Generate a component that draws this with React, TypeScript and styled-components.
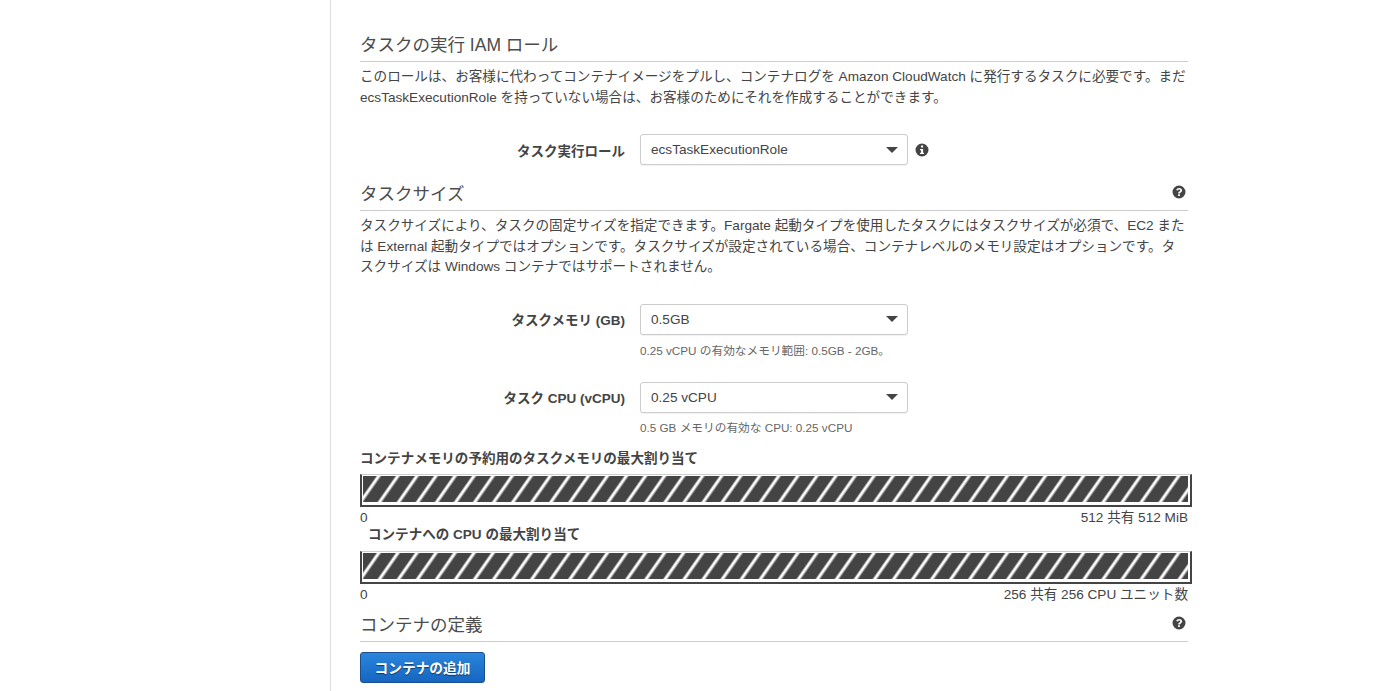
import React from "react";
import styled, { createGlobalStyle } from "styled-components";

const Global = createGlobalStyle`
  html, body { margin: 0; padding: 0; background: #fff; height: 691px; overflow: hidden; }
  body { font-family: "Liberation Sans", "Noto Sans CJK JP", sans-serif; color: #444; font-size: 13.6px; }
`;

const Page = styled.div`
  display: flex;
  height: 691px;
  overflow: hidden;
`;
const Sidebar = styled.aside`
  width: 330px;
  flex: none;
  border-right: 1px solid #ddd;
`;
const Main = styled.main`
  width: 828px;
  margin-left: 29px;
  padding-top: 32px;
`;
const SectionHead = styled.div<{ $top?: number }>`
  display: flex;
  justify-content: space-between;
  height: 30px;
  box-sizing: border-box;
  border-bottom: 1px solid #ccc;
  margin-top: ${(p) => p.$top ?? 0}px;
`;
const Title = styled.h3`
  margin: 0;
  font-size: 17.5px;
  font-weight: 400;
  line-height: 26px;
  color: #4c4c4c;
`;
const HelpIcon = styled.svg`
  width: 14px;
  height: 14px;
  margin: 4px 2px 0 0;
  fill: #444;
`;
const Para = styled.p`
  margin: 5px 0 0;
  font-size: 13.6px;
  line-height: 20.5px;
  color: #444;
  width: 828px;
`;
const FieldRow = styled.div<{ $top: number }>`
  display: flex;
  align-items: center;
  margin-top: ${(p) => p.$top}px;
  height: 31px;
`;
const Label = styled.label`
  width: 265px;
  margin-right: 15px;
  text-align: right;
  font-weight: 700;
  font-size: 13.5px;
  color: #444;
  flex: none;
`;
const Select = styled.div`
  width: 268px;
  height: 31px;
  box-sizing: border-box;
  border: 1px solid #ccc;
  border-radius: 3px;
  box-shadow: 0 1px 1px rgba(0, 0, 0, 0.06);
  display: flex;
  align-items: center;
  justify-content: space-between;
  padding: 0 9px 0 10px;
  background: #fff;
  font-size: 13.6px;
  color: #444;
`;
const Caret = styled.span`
  width: 0;
  height: 0;
  border-left: 6px solid transparent;
  border-right: 6px solid transparent;
  border-top: 6px solid #444;
`;
const InfoIcon = styled.svg`
  width: 14px;
  height: 14px;
  margin-left: 7px;
  fill: #444;
`;
const Hint = styled.div<{ $top: number }>`
  margin: ${(p) => p.$top}px 0 0 280px;
  font-size: 11.7px;
  line-height: 14px;
  color: #666;
`;
const BarTitle = styled.div<{ $indent?: number; $top: number }>`
  font-weight: 700;
  font-size: 13.55px;
  line-height: 16px;
  color: #444;
  margin-top: ${(p) => p.$top}px;
  margin-left: ${(p) => p.$indent ?? 0}px;
`;
const Bar = styled.div<{ $gap: number }>`
  width: 832px;
  height: 33px;
  box-sizing: border-box;
  margin-top: ${(p) => p.$gap}px;
  border-style: solid;
  border-color: #ccc #444 #444 #444;
  border-width: 1px 2px 2px 2px;
  padding: 1px 2px 3px 1px;
  background: #fff;
`;
const BarFill = styled.div`
  height: 100%;
  background: repeating-linear-gradient(
    125deg,
    #444 0,
    #444 10.5px,
    #fff 12.3px,
    #fff 13.3px,
    #444 15.6px
  );
`;
const BarScale = styled.div`
  display: flex;
  justify-content: space-between;
  margin-top: 2px;
  font-size: 13.6px;
  line-height: 17px;
  color: #444;
`;
const AddButton = styled.button`
  display: block;
  margin-top: 10px;
  width: 125px;
  height: 31px;
  box-sizing: border-box;
  border: 1px solid #1a4f8f;
  border-radius: 3px;
  background: linear-gradient(#2b85dd, #1566c0);
  color: #fff;
  font-family: inherit;
  font-size: 13.7px;
  font-weight: 700;
  text-shadow: 0 1px 1px rgba(0, 0, 0, 0.5);
  padding: 0;
`;

const Help = () => (
  <HelpIcon viewBox="0 0 14 14">
    <path fillRule="evenodd" d="M7 .5a6.5 6.5 0 1 0 0 13 6.5 6.5 0 0 0 0-13zM7.9 11H6.1V9.3h1.8V11zm1.9-4.6c-.3.4-.7.7-1.1 1-.4.2-.7.6-.7 1.1H6.2c0-1 .3-1.4 1-1.9.4-.3 1-.6 1-1.2 0-.5-.5-.9-1.1-.9-.6 0-1.1.4-1.3 1.1L4.2 5C4.6 3.7 5.7 3 7.2 3c1.6 0 2.9 1 2.9 2.3 0 .4-.1.8-.3 1.1z" />
  </HelpIcon>
);

export default function App() {
  return (
    <Page>
      <Global />
      <Sidebar />
      <Main>
        <SectionHead>
          <Title>タスクの実行 IAM ロール</Title>
        </SectionHead>
        <Para>
          このロールは、お客様に代わってコンテナイメージをプルし、コンテナログを Amazon CloudWatch に発行するタスクに必要です。まだ ecsTaskExecutionRole を持っていない場合は、お客様のためにそれを作成することができます。
        </Para>
        <FieldRow $top={26}>
          <Label>タスク実行ロール</Label>
          <Select>
            ecsTaskExecutionRole
            <Caret />
          </Select>
          <InfoIcon viewBox="0 0 14 14">
            <path fillRule="evenodd" d="M7 .5a6.5 6.5 0 1 0 0 13 6.5 6.5 0 0 0 0-13zM6 2.5h2.1v2H6v-2zM9 11H5V9.8h1V7.2H5V6h3.1v3.8H9V11z" />
          </InfoIcon>
        </FieldRow>
        <SectionHead $top={16}>
          <Title>タスクサイズ</Title>
          <Help />
        </SectionHead>
        <Para>
          タスクサイズにより、タスクの固定サイズを指定できます。Fargate 起動タイプを使用したタスクにはタスクサイズが必須で、EC2 または External 起動タイプではオプションです。タスクサイズが設定されている場合、コンテナレベルのメモリ設定はオプションです。タスクサイズは Windows コンテナではサポートされません。
        </Para>
        <FieldRow $top={26}>
          <Label>タスクメモリ (GB)</Label>
          <Select>
            0.5GB
            <Caret />
          </Select>
        </FieldRow>
        <Hint $top={9}>0.25 vCPU の有効なメモリ範囲: 0.5GB - 2GB。</Hint>
        <FieldRow $top={24}>
          <Label>タスク CPU (vCPU)</Label>
          <Select>
            0.25 vCPU
            <Caret />
          </Select>
        </FieldRow>
        <Hint $top={8}>0.5 GB メモリの有効な CPU: 0.25 vCPU</Hint>
        <BarTitle $top={16}>コンテナメモリの予約用のタスクメモリの最大割り当て</BarTitle>
        <Bar $gap={7}>
          <BarFill />
        </Bar>
        <BarScale>
          <span>0</span>
          <span>512 共有 512 MiB</span>
        </BarScale>
        <BarTitle $top={1} $indent={8}>コンテナへの CPU の最大割り当て</BarTitle>
        <Bar $gap={8}>
          <BarFill />
        </Bar>
        <BarScale>
          <span>0</span>
          <span>256 共有 256 CPU ユニット数</span>
        </BarScale>
        <SectionHead $top={9}>
          <Title>コンテナの定義</Title>
          <Help />
        </SectionHead>
        <AddButton>コンテナの追加</AddButton>
      </Main>
    </Page>
  );
}
